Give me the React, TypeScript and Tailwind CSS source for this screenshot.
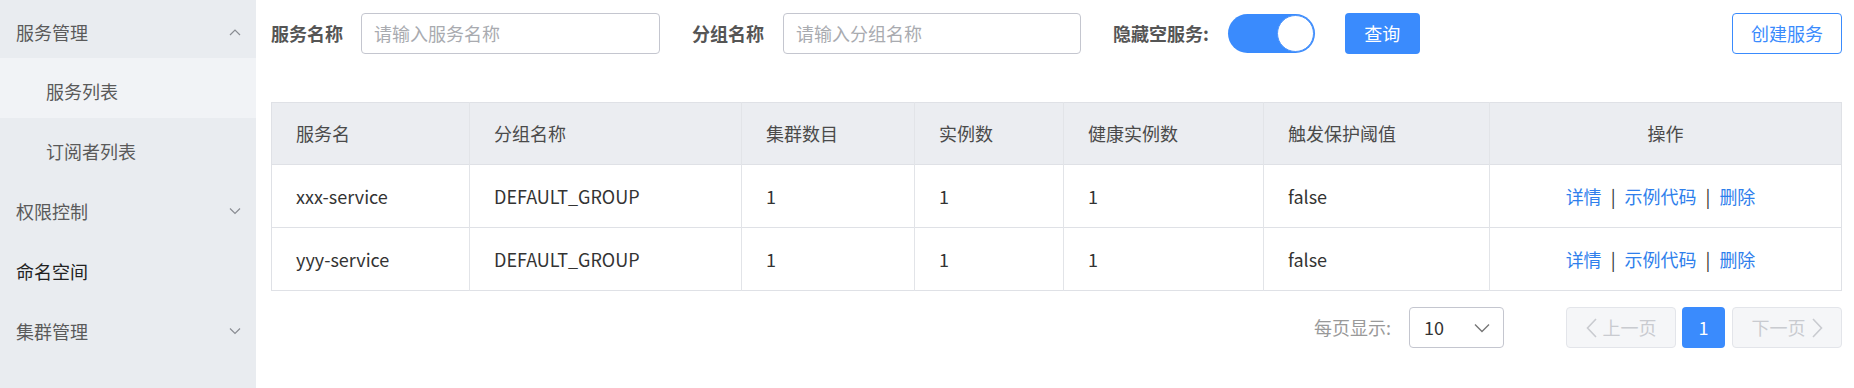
import React from "react";

const Chevron = ({ up }: { up?: boolean }) => (
  <svg width="12" height="8" viewBox="0 0 12 8" className="text-[#8a8d93]">
    {up ? (
      <polyline points="1,7 6,2 11,7" fill="none" stroke="currentColor" strokeWidth="1.2" />
    ) : (
      <polyline points="1,1.5 6,6.5 11,1.5" fill="none" stroke="currentColor" strokeWidth="1.2" />
    )}
  </svg>
);

const rows = [
  { name: "xxx-service", group: "DEFAULT_GROUP" },
  { name: "yyy-service", group: "DEFAULT_GROUP" },
];

export default function App() {
  return (
    <div className="flex w-[1854px] h-[388px] bg-white font-['Noto_Sans_CJK_SC','Noto_Sans',sans-serif] text-[18px] overflow-hidden">
      {/* Sidebar */}
      <aside className="w-[256px] shrink-0 bg-[#e9ecf0] text-[#5a5a5a]">
        <div className="h-[58px] pt-[6px] flex items-center justify-between pl-[16px] pr-[15px]">
          <span>服务管理</span>
          <Chevron up />
        </div>
        <div className="h-[60px] pt-[6px] flex items-center pl-[46px] bg-[#f1f3f6]">
          <span>服务列表</span>
        </div>
        <div className="h-[60px] pt-[6px] flex items-center pl-[46px]">
          <span>订阅者列表</span>
        </div>
        <div className="h-[60px] pt-[6px] flex items-center justify-between pl-[16px] pr-[15px]">
          <span>权限控制</span>
          <Chevron />
        </div>
        <div className="h-[60px] pt-[6px] flex items-center pl-[16px] text-[#222]">
          <span>命名空间</span>
        </div>
        <div className="h-[60px] pt-[6px] flex items-center justify-between pl-[16px] pr-[15px]">
          <span>集群管理</span>
          <Chevron />
        </div>
      </aside>

      {/* Main */}
      <main className="flex-1 pl-[15px] pr-[13px] pt-[13px]">
        {/* Filter bar */}
        <div className="flex items-center h-[41px]">
          <span className="font-bold text-[#555] mr-[18px]">服务名称</span>
          <div className="w-[299px] h-[41px] border border-[#c4c6cf] rounded-[4px] flex items-center pl-[12px] text-[#a9abb0] mr-[32px]">
            请输入服务名称
          </div>
          <span className="font-bold text-[#555] mr-[19px]">分组名称</span>
          <div className="w-[298px] h-[41px] border border-[#c4c6cf] rounded-[4px] flex items-center pl-[12px] text-[#a9abb0] mr-[32px]">
            请输入分组名称
          </div>
          <span className="font-bold text-[#555] mr-[19px]">隐藏空服务:</span>
          <div className="w-[87px] h-[39px] rounded-full bg-[#3a8bfd] flex items-center justify-end pr-[1px] mr-[30px]">
            <div className="w-[37px] h-[37px] rounded-full bg-white border border-[#4d94fb]" />
          </div>
          <div className="w-[75px] h-[41px] rounded-[4px] bg-[#3a8bfd] text-white flex items-center justify-center">
            查询
          </div>
          <div className="ml-auto w-[110px] h-[41px] rounded-[4px] border border-[#3a8bfd] text-[#3a8bfd] flex items-center justify-center">
            创建服务
          </div>
        </div>

        {/* Table */}
        <table className="mt-[48px] w-[1570px] table-fixed border-collapse border border-[#dfe1e6] text-[#333]">
          <colgroup>
            <col className="w-[198px]" />
            <col className="w-[272px]" />
            <col className="w-[173px]" />
            <col className="w-[149px]" />
            <col className="w-[200px]" />
            <col className="w-[226px]" />
            <col className="w-[352px]" />
          </colgroup>
          <thead>
            <tr className="h-[62px] bg-[#ebedf1] text-[#4a4a4a]">
              {["服务名", "分组名称", "集群数目", "实例数", "健康实例数", "触发保护阈值"].map((h) => (
                <th key={h} className="font-normal text-left pl-[24px] border-r border-[#e2e4e8]">
                  {h}
                </th>
              ))}
              <th className="font-normal text-center">操作</th>
            </tr>
          </thead>
          <tbody>
            {rows.map((r) => (
              <tr key={r.name} className="h-[63px] border-t border-[#dfe1e6]">
                <td className="pl-[24px] border-r border-[#e2e4e8]">{r.name}</td>
                <td className="pl-[24px] border-r border-[#e2e4e8]">{r.group}</td>
                <td className="pl-[24px] border-r border-[#e2e4e8]">1</td>
                <td className="pl-[24px] border-r border-[#e2e4e8]">1</td>
                <td className="pl-[24px] border-r border-[#e2e4e8]">1</td>
                <td className="pl-[24px] border-r border-[#e2e4e8]">false</td>
                <td className="text-center pr-[10px]">
                  <span className="text-[#2f7fec]">详情</span>
                  <span className="mx-[9px] text-[#333]">|</span>
                  <span className="text-[#2f7fec]">示例代码</span>
                  <span className="mx-[9px] text-[#333]">|</span>
                  <span className="text-[#2f7fec]">删除</span>
                </td>
              </tr>
            ))}
          </tbody>
        </table>

        {/* Pagination */}
        <div className="mt-[16px] flex items-center justify-end">
          <span className="text-[#999]">每页显示:</span>
          <div className="ml-[18px] w-[95px] h-[41px] border border-[#c4c6cf] rounded-[4px] flex items-center justify-between pl-[14px] pr-[13px] text-[#333]">
            <span>10</span>
            <svg width="16" height="10" viewBox="0 0 16 10">
              <polyline points="1,1.5 8,8.5 15,1.5" fill="none" stroke="#777" strokeWidth="1.4" />
            </svg>
          </div>
          <div className="ml-[62px] w-[110px] h-[41px] rounded-[4px] border border-[#e3e5ea] bg-[#f5f6f8] text-[#c9cbd0] flex items-center justify-center gap-[6px]">
            <svg width="11" height="20" viewBox="0 0 11 20">
              <polyline points="10,1 1.5,10 10,19" fill="none" stroke="#c9cbd0" strokeWidth="1.6" />
            </svg>
            <span>上一页</span>
          </div>
          <div className="ml-[6px] w-[43px] h-[41px] rounded-[4px] bg-[#3a8bfd] text-white flex items-center justify-center">
            1
          </div>
          <div className="ml-[7px] w-[110px] h-[41px] rounded-[4px] border border-[#e3e5ea] bg-[#f5f6f8] text-[#c9cbd0] flex items-center justify-center gap-[6px]">
            <span>下一页</span>
            <svg width="11" height="20" viewBox="0 0 11 20">
              <polyline points="1,1 9.5,10 1,19" fill="none" stroke="#c9cbd0" strokeWidth="1.6" />
            </svg>
          </div>
        </div>
      </main>
    </div>
  );
}
